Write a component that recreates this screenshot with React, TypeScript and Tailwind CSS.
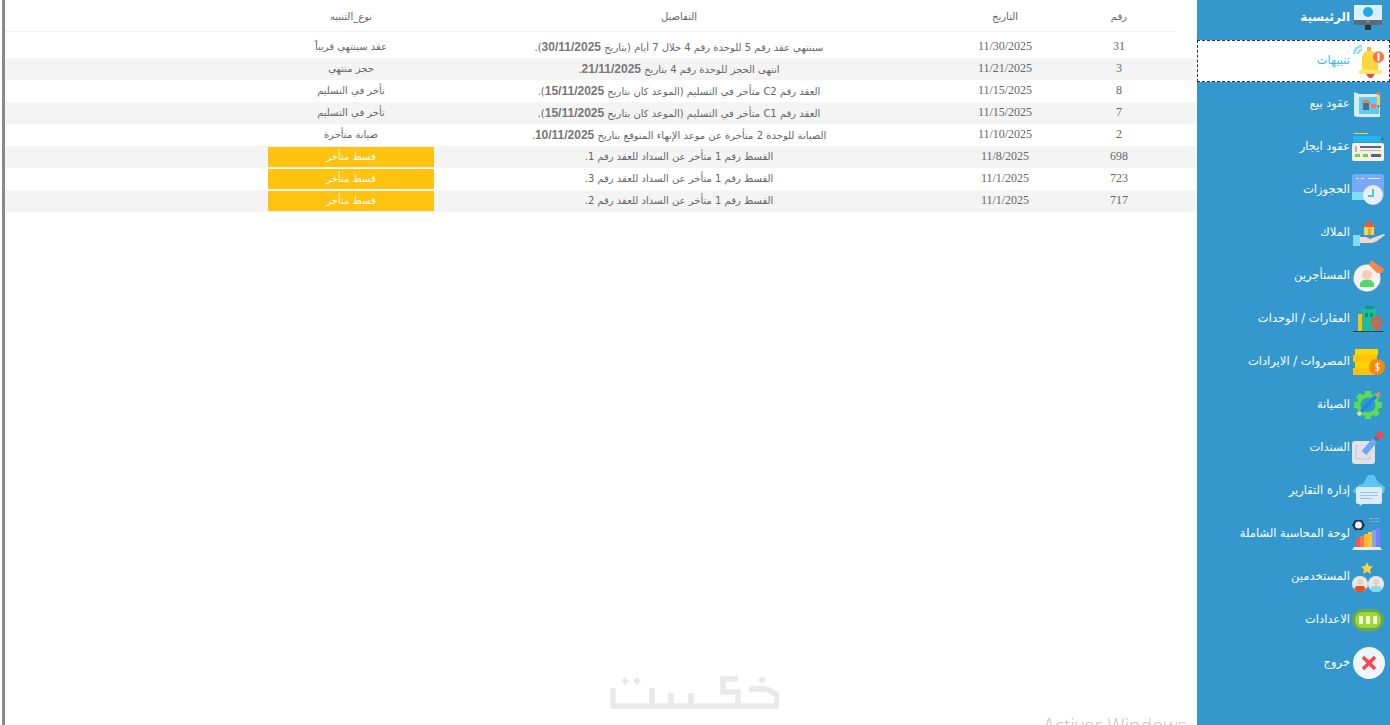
import React from "react";

const B = ({ children }: { children: React.ReactNode }) => <b className="font-['Liberation_Sans',sans-serif] text-[12px] font-bold text-[#777]">{children}</b>;

const rows: [string, string, React.ReactNode, string, boolean][] = [
  ["31", "11/30/2025", <>سينتهي عقد رقم 5 للوحدة رقم 4 خلال 7 أيام (بتاريخ <B>30/11/2025</B>).</>, "عقد سينتهي قريباً", false],
  ["3", "11/21/2025", <>انتهى الحجز للوحدة رقم 4 بتاريخ <B>21/11/2025</B>.</>, "حجز منتهي", false],
  ["8", "11/15/2025", <>العقد رقم C2 متأخر في التسليم (الموعد كان بتاريخ <B>15/11/2025</B>).</>, "تأخر في التسليم", false],
  ["7", "11/15/2025", <>العقد رقم C1 متأخر في التسليم (الموعد كان بتاريخ <B>15/11/2025</B>).</>, "تأخر في التسليم", false],
  ["2", "11/10/2025", <>الصيانة للوحدة 2 متأخرة عن موعد الإنهاء المتوقع بتاريخ <B>10/11/2025</B>.</>, "صيانة متأخرة", false],
  ["698", "11/8/2025", "القسط رقم 1 متأخر عن السداد للعقد رقم 1.", "قسط متأخر", true],
  ["723", "11/1/2025", "القسط رقم 1 متأخر عن السداد للعقد رقم 3.", "قسط متأخر", true],
  ["717", "11/1/2025", "القسط رقم 1 متأخر عن السداد للعقد رقم 2.", "قسط متأخر", true],
];

const Ic = ({ children }: { children: React.ReactNode }) => (
  <svg width="36" height="36" viewBox="0 0 36 36" className="shrink-0 overflow-visible">
    {children}
  </svg>
);

const icons: Record<string, React.ReactNode> = {
  home: (
    <Ic>
      <rect x="4" y="6" width="28" height="15" fill="#dff1fc" />
      <path d="M7 10h5M7 15h5M24 10h5M24 15h5" stroke="#bfe3f8" strokeWidth="1" />
      <circle cx="18" cy="13" r="5" fill="#1fa9ea" />
      <rect x="4" y="21" width="28" height="5" fill="#5a6b7b" />
      <rect x="17" y="22" width="2" height="1" fill="#f5b83d" />
      <rect x="15" y="26" width="6" height="5" fill="#2f3338" />
    </Ic>
  ),
  bell: (
    <Ic>
      <path d="M4 12a8 8 0 0 1 8-8M8 12a4 4 0 0 1 4-4" fill="none" stroke="#86def9" strokeWidth="2.500" />
      <path d="M12 28V17a8 8 0 0 1 5-8V5h4v4a8 8 0 0 1 7 8v11z" fill="#ffd63f" />
      <path d="M17 5h4v4h-4z" fill="#f5b83d" />
      <rect x="9" y="28" width="23" height="4" fill="#ffe96a" />
      <path d="M16 32h9l-3 4h-3z" fill="#f6434f" />
      <circle cx="28.500" cy="15" r="5.700" fill="#f5774a" />
      <rect x="27.500" y="11" width="2" height="8" fill="#fff" />
    </Ic>
  ),
  sale: (
    <Ic>
      <path d="M4 7l5 2h21v23H7l-3-1z" fill="#d8eefc" />
      <rect x="9" y="12" width="20" height="17" fill="#63c8f4" />
      <path d="M11 18l5-4 5 4z" fill="#ef7d4f" />
      <rect x="13" y="18" width="6" height="7" fill="#48708f" />
      <rect x="21" y="19" width="5" height="4" fill="#ef7d4f" />
      <rect x="27" y="7" width="3" height="3" fill="#f5774a" />
      <rect x="27" y="10" width="3" height="10" fill="#f5cf62" />
      <path d="M27 20h3l-1.500 4z" fill="#a87a4a" />
    </Ic>
  ),
  lease: (
    <Ic>
      <rect x="4" y="5" width="14" height="1" fill="#ffd21f" />
      <rect x="3" y="8" width="28" height="6" fill="#22b3f2" />
      <path d="M31 9l3 2-3 2z" fill="#5a6b7b" />
      <rect x="2" y="15" width="32" height="18" rx="2" fill="#fbeee0" />
      <rect x="10" y="18" width="21" height="2" fill="#4d6b80" />
      <rect x="10" y="22" width="21" height="1" fill="#b7b7b7" />
      <rect x="5" y="26" width="5" height="3" fill="#56dc55" />
      <rect x="13" y="26" width="5" height="3" fill="#56dc55" />
      <rect x="21" y="26" width="10" height="3" fill="#4d6b80" />
      <rect x="5" y="18" width="2" height="6" fill="#b7b7b7" />
    </Ic>
  ),
  book: (
    <Ic>
      <rect x="2" y="3" width="32" height="24" rx="3" fill="#76a8fc" />
      <rect x="2" y="21" width="20" height="8" fill="#7fdcf5" />
      <rect x="6" y="7" width="3" height="1" fill="#e6f0ff" />
      <rect x="11" y="7" width="3" height="1" fill="#e6f0ff" />
      <rect x="18" y="7" width="12" height="1" fill="#e6f0ff" />
      <circle cx="23" cy="24" r="10" fill="#eaeef2" />
      <path d="M23 18v7h-5" fill="none" stroke="#4cc6f0" strokeWidth="2" />
    </Ic>
  ),
  prop: (
    <Ic>
      <path d="M12 14l7-8 7 8z" fill="#ef5b3e" />
      <rect x="14" y="13" width="10" height="8" fill="#f7d25a" />
      <rect x="18" y="15" width="3" height="6" fill="#e8a33c" />
      <rect x="3" y="21" width="7" height="11" fill="#7fdcf5" />
      <path d="M10 23h6l4 2 8-3 6-2 1 1-8 6-5 2H10z" fill="#f5d8c8" />
    </Ic>
  ),
  ten: (
    <Ic>
      <circle cx="17" cy="21" r="13.500" fill="#f8f1ee" />
      <path d="M21 3l13 9-2 4h-5l-8-8z" fill="#f5884a" />
      <circle cx="17" cy="18" r="5" fill="#f3cdb8" />
      <path d="M10 30v-4l3-3h8l3 3v4z" fill="#55d86a" />
    </Ic>
  ),
  bld: (
    <Ic>
      <rect x="15" y="6" width="9" height="4" fill="#0d9b82" />
      <rect x="12" y="9" width="14" height="22" fill="#1cbc9c" />
      <rect x="8" y="14" width="4" height="17" fill="#ffc20e" />
      <rect x="15" y="13" width="3" height="4" fill="#138f79" />
      <rect x="20" y="13" width="3" height="4" fill="#138f79" />
      <path d="M21 22a5 5 0 1 1 11 0c0 3-3 6-5.500 9-2.500-3-5.500-6-5.500-9z" fill="#e9583f" />
      <circle cx="26.500" cy="22" r="2" fill="#1cbc9c" />
      <rect x="3" y="31" width="30" height="1" fill="#2c3e50" />
    </Ic>
  ),
  exp: (
    <Ic>
      <rect x="5" y="6" width="23" height="6" fill="#ffd500" />
      <rect x="3" y="12" width="24" height="7" fill="#ffc20e" />
      <rect x="5" y="19" width="23" height="6" fill="#ffd500" />
      <rect x="3" y="25" width="22" height="7" fill="#ffc20e" />
      <circle cx="27" cy="24" r="8" fill="#f58a0b" />
      <path d="M30 21h-4v3h3v3h-4M27.500 19v10" fill="none" stroke="#fff" strokeWidth="1" />
    </Ic>
  ),
  gear: (
    <Ic>
      <path d="M15 5h6v3l3 1 2-2 4 4-2 2 1 3h3v6h-3l-1 3 2 2-4 4-2-2-3 1v3h-6v-3l-3-1-2 2-4-4 2-2-1-3H4v-6h3l1-3-2-2 4-4 2 2 3-1z" fill="#5cdb56" />
      <circle cx="18" cy="19" r="7.500" fill="#3498cf" />
      <path d="M11 26L26 10" stroke="#1e86e6" strokeWidth="4" />
      <path d="M26 10l4-3" stroke="#f5885a" strokeWidth="3" />
      <path d="M11 26l-3 3" stroke="#f6d9a8" strokeWidth="3" />
    </Ic>
  ),
  vou: (
    <Ic>
      <rect x="2" y="12" width="23" height="23" rx="3" fill="#dfe3e8" />
      <path d="M8 17h-2v13h14v-4" fill="none" stroke="#c2c7cd" strokeWidth="1" />
      <path d="M14 24l11-13" stroke="#6ea6f5" strokeWidth="6" />
      <path d="M25 11l3-3" stroke="#6b6b70" strokeWidth="5" />
      <circle cx="30" cy="6" r="3.500" fill="#f6484f" />
    </Ic>
  ),
  rep: (
    <Ic>
      <path d="M3 18l6-5 4-1 5-9h6l4 7 7 5-1 6H4z" fill="#5cc6f5" />
      <path d="M6 17a2 2 0 0 1 2-2h22a2 2 0 0 1 2 2v13a2 2 0 0 1-2 2H13l-4 2 1-2H8a2 2 0 0 1-2-2z" fill="#dcecfc" />
      <rect x="10" y="20" width="18" height="1" fill="#8ec4f5" />
      <rect x="10" y="23" width="18" height="1" fill="#8ec4f5" />
      <rect x="10" y="26" width="12" height="1" fill="#8ec4f5" />
    </Ic>
  ),
  acc: (
    <Ic>
      <path d="M2 10l3-5h7l3 5-3 5H5z" fill="#26324a" />
      <circle cx="8.500" cy="10" r="3.500" fill="#e8f1f7" />
      <rect x="20" y="3" width="2" height="1" fill="#ffc20e" />
      <rect x="23" y="3" width="7" height="1" fill="#7da5f5" />
      <rect x="20" y="6" width="2" height="1" fill="#f5884a" />
      <rect x="23" y="6" width="7" height="1" fill="#7da5f5" />
      <rect x="6" y="23" width="4" height="9" fill="#f9564e" />
      <rect x="10" y="21" width="4" height="11" fill="#fb7a3c" />
      <rect x="14" y="19" width="4" height="13" fill="#fdb52f" />
      <rect x="18" y="17" width="4" height="15" fill="#fdc82f" />
      <rect x="22" y="15" width="4" height="17" fill="#7da5f5" />
      <rect x="26" y="13" width="4" height="19" fill="#747ffb" />
      <path d="M4 32h26l2 3H2z" fill="#e8eef3" />
    </Ic>
  ),
  usr: (
    <Ic>
      <path d="M17 4l1.800 4 4.200.500-3 3 .8 4.500-3.800-2.200-3.800 2.200.8-4.500-3-3 4.200-.500z" fill="#ffd53f" />
      <circle cx="10" cy="26" r="8" fill="#e9e9e9" />
      <circle cx="10" cy="24" r="3" fill="#f3cdb8" />
      <path d="M4 31l2-3h8l2 3-3 3H7z" fill="#e2532f" />
      <circle cx="26" cy="26" r="8" fill="#e9e9e9" />
      <circle cx="26" cy="24" r="3" fill="#f3cdb8" />
      <path d="M20 31l2-3h8l2 3-3 3h-6z" fill="#7fdcf5" />
    </Ic>
  ),
  set: (
    <Ic>
      <rect x="2" y="8" width="32" height="22" rx="11" fill="#6aa553" />
      <rect x="5" y="11" width="26" height="16" rx="8" fill="#9bdb30" />
      <rect x="9" y="15" width="4" height="8" fill="#f2fbe8" />
      <rect x="16" y="15" width="4" height="8" fill="#f2fbe8" />
      <rect x="23" y="15" width="4" height="8" fill="#f2fbe8" />
    </Ic>
  ),
  out: (
    <Ic>
      <circle cx="19" cy="19" r="16" fill="#eef5fc" />
      <path d="M13 13l12 12M25 13L13 25" stroke="#f9464f" strokeWidth="3.500" />
    </Ic>
  ),
};

const nav: [string, string][] = [
  ["الرئيسية", "home"],
  ["تنبيهات", "bell"],
  ["عقود بيع", "sale"],
  ["عقود ايجار", "lease"],
  ["الحجوزات", "book"],
  ["الملاك", "prop"],
  ["المستأجرين", "ten"],
  ["العقارات / الوحدات", "bld"],
  ["المصروات / الايرادات", "exp"],
  ["الصيانة", "gear"],
  ["السندات", "vou"],
  ["إدارة التقارير", "rep"],
  ["لوحة المحاسبة الشاملة", "acc"],
  ["المستخدمين", "usr"],
  ["الاعدادات", "set"],
  ["خروج", "out"],
];

export default function App() {
  return (
    <div dir="ltr" className="relative flex h-[725px] w-[1390px] overflow-hidden bg-white font-['DejaVu_Sans',sans-serif]">
      <div className="ml-[2px] w-[3px] shrink-0 bg-[#8a8a8a]" />
      <main className="relative min-w-0 flex-1" dir="rtl">
        <table className="w-full table-fixed border-collapse text-[10px] text-[#666]">
          <colgroup>
            <col className="w-[21px]" />
            <col className="w-[24px]" />
            <col className="w-[66px]" />
            <col className="w-[162px]" />
            <col className="w-[490px]" />
            <col className="w-[166px]" />
            <col />
          </colgroup>
          <thead>
            <tr className="h-[31px]">
              <th colSpan={2} />
              <th className="pt-[2px] font-normal">رقم</th>
              <th className="pt-[2px] font-normal">التاريخ</th>
              <th className="pt-[2px] font-normal">التفاصيل</th>
              <th className="pt-[2px] font-normal">نوع_التنبيه</th>
              <th />
            </tr>
            <tr className="h-[5px]">
              <td className="p-0" />
              <td colSpan={6} className="border-t border-[#f0f0f0] p-0" />
            </tr>
          </thead>
          <tbody>
            {rows.map((r, i) => (
              <tr key={i} className={`h-[22px] ${i % 2 ? "bg-[#f4f4f4]" : "bg-white"}`}>
                <td colSpan={2} className="p-0" />
                <td className="p-0 pb-[2px] text-center font-['Liberation_Serif',serif] text-[12px]">{r[0]}</td>
                <td className="p-0 pb-[2px] text-center font-['Liberation_Serif',serif] text-[12px]">{r[1]}</td>
                <td className="p-0 pb-[1px] text-center">{r[2]}</td>
                <td className="p-0">
                  {r[4] ? (
                    <div className="flex h-[20px] items-center justify-center bg-[#ffc20e] pb-[1px] text-white">{r[3]}</div>
                  ) : (
                    <div className="pb-[1px] text-center">{r[3]}</div>
                  )}
                </td>
                <td className="p-0" />
              </tr>
            ))}
          </tbody>
        </table>
        <svg width="170" height="36" viewBox="0 0 170 36" className="absolute left-[604px] top-[675px]" fill="none" stroke="#e9e9e9" strokeWidth="5.500">
          <path d="M4 13V31H43V13M43 31H129M62 18V31M82 18V31M129 4H114V17H129V31M129 31H168V20L158 14H140" />
          <path d="M16 2l4 4-4 4-4-4zM28 2l4 4-4 4-4-4zM153 1l4 4-4 4-4-4z" fill="#e9e9e9" stroke="none" />
        </svg>
        <div dir="ltr" className="absolute left-[1038px] top-[713px] whitespace-nowrap font-['Open_Sans',sans-serif] text-[19.500px] font-light leading-[26px] text-[#c4c4c4]">
          Activer Windows
        </div>
      </main>
      <aside dir="rtl" className="flex w-[193px] shrink-0 flex-col bg-[#3498cf] text-[11.500px]">
        {nav.map(([label, ic], i) => (
          <div
            key={label}
            className={`flex shrink-0 items-center ${
              i === 0
                ? "-mt-[3px] h-[43px] pb-[3px] pr-[4px] text-[12px] font-bold text-white"
                : i === 1
                  ? "h-[42px] border border-dashed border-[#333] bg-white pb-[2px] pr-[3px] text-[#2fb8f0]"
                  : "h-[43px] pb-[1px] pr-[4px] text-white"
            }`}
          >
            {icons[ic]}
            <span className={`whitespace-nowrap ${i === 0 ? "" : "pt-[2px]"}`}>{label}</span>
          </div>
        ))}
      </aside>
    </div>
  );
}
